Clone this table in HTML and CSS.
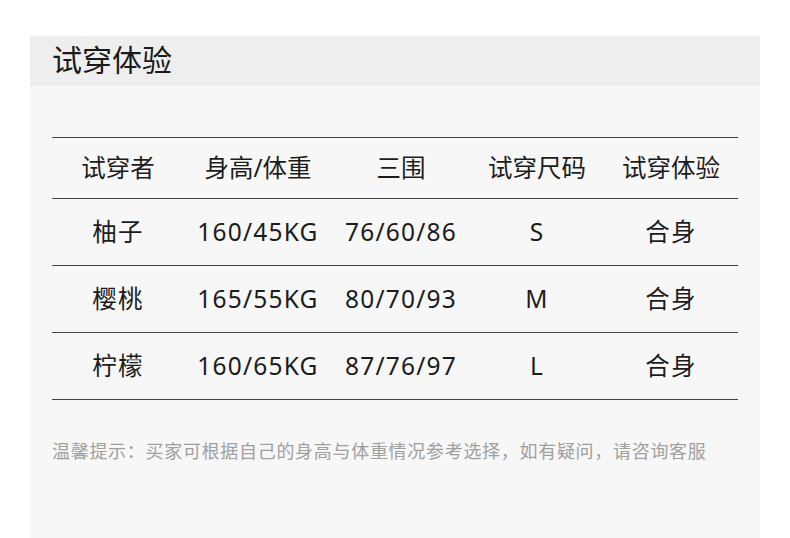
FILE: index.html
```html
<!DOCTYPE html>
<html lang="zh">
<head>
<meta charset="utf-8">
<link rel="stylesheet" href="styles.css">
</head>
<body>
<div class="page">
  <section class="panel">
    <header class="panel-head"><h1 class="title">试穿体验</h1></header>
    <div class="panel-body">
      <table class="fit-table">
        <colgroup>
          <col class="c-name"><col class="c-hw"><col class="c-bust"><col class="c-size"><col class="c-fit">
        </colgroup>
        <thead>
          <tr><th>试穿者</th><th>身高/体重</th><th>三围</th><th>试穿尺码</th><th>试穿体验</th></tr>
        </thead>
        <tbody>
          <tr><td>柚子</td><td>160/45KG</td><td>76/60/86</td><td>S</td><td>合身</td></tr>
          <tr><td>樱桃</td><td>165/55KG</td><td>80/70/93</td><td>M</td><td>合身</td></tr>
          <tr><td>柠檬</td><td>160/65KG</td><td>87/76/97</td><td>L</td><td>合身</td></tr>
        </tbody>
      </table>
      <p class="note">温馨提示：买家可根据自己的身高与体重情况参考选择，如有疑问，请咨询客服</p>
    </div>
  </section>
</div>
</body>
</html>
```
FILE: styles.css
```css
html, body {
  margin: 0;
  padding: 0;
  background: #ffffff;
}
body {
  font-family: "Noto Sans", "Noto Sans CJK SC", sans-serif;
  color: #1c1c1c;
}
.page {
  padding: 36px 30px 0 30px;
}
.panel {
  background: #f7f7f7;
  height: 502px;
}
.panel-head {
  background: #eeeeee;
  height: 50px;
  display: flex;
  align-items: center;
  padding-left: 22px;
}
.title {
  margin: 0 0 2px 0;
  font-size: 30px;
  font-weight: 400;
  line-height: 1;
  color: #1a1a1a;
}
.panel-body {
  padding: 51px 22px 0 22px;
}
.fit-table {
  width: 100%;
  border-collapse: collapse;
  table-layout: fixed;
}
.c-name { width: 132px; }
.c-hw { width: 148px; }
.c-bust { width: 138px; }
.c-size { width: 134px; }
.c-fit { width: 134px; }
.fit-table th,
.fit-table td {
  text-align: center;
  font-size: 24.5px;
  font-weight: 400;
  line-height: 30px;
  padding: 0;
  border-top: 1px solid #444444;
  border-bottom: 1px solid #444444;
  color: #1c1c1c;
}
.fit-table th {
  height: 60px;
}
.fit-table td {
  height: 66px;
  letter-spacing: 1.2px;
}
.note {
  margin: 40px 0 0 0;
  font-size: 18px;
  letter-spacing: 0.7px;
  color: #a0a0a0;
  line-height: 22px;
}
```
